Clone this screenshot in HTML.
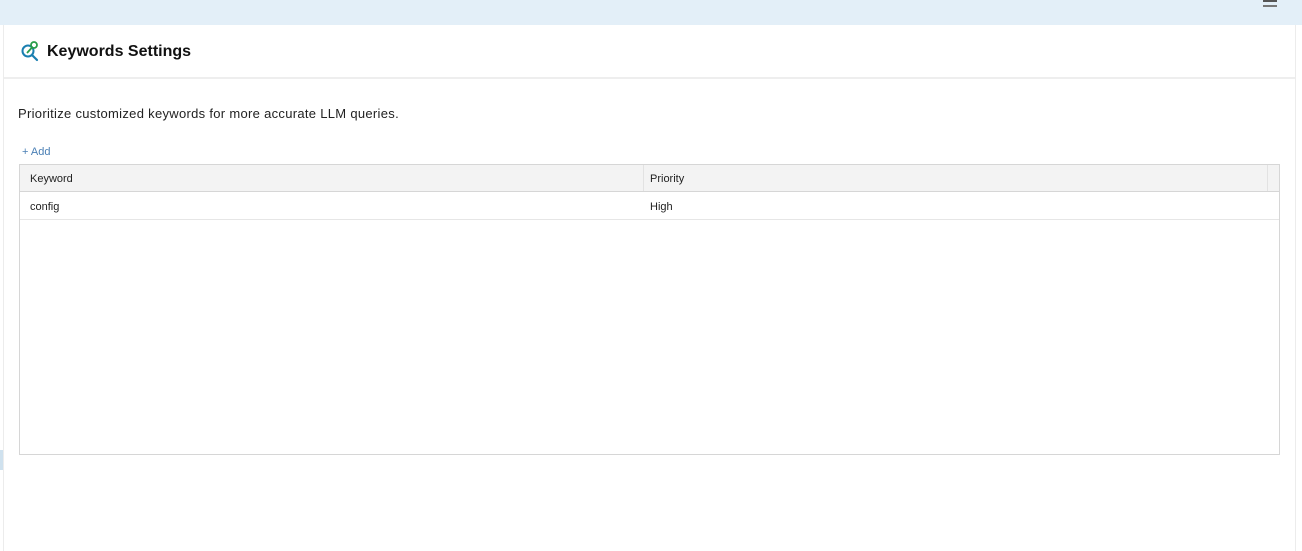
<!DOCTYPE html>
<html><head><style>
body{margin:0;width:1302px;height:551px;background:#fff;font-family:"Liberation Sans",sans-serif;position:relative;overflow:hidden;color:#222}
.top{position:absolute;left:0;top:0;width:1302px;height:25px;background:#e3eff8}
.panel{position:absolute;left:3px;top:25px;width:1291px;height:526px;background:#fff;border-left:1px solid #ececec;border-right:1px solid #ececec}
.hdr{position:absolute;left:0;top:0;width:100%;height:52px;border-bottom:2px solid #eee}
.title{position:absolute;left:43px;top:18px;font-size:16px;font-weight:bold;color:#111}
.desc{position:absolute;left:14px;top:81px;font-size:13px;color:#222;letter-spacing:0.3px}
.add{position:absolute;left:18px;top:121px;font-size:11px;color:#4a7fb5}
.tbl{position:absolute;left:15px;top:139px;width:1259px;height:289px;border:1px solid #d6d6d6}
.th{position:absolute;left:0;top:0;width:100%;height:26px;background:#f3f3f3;border-bottom:1px solid #d6d6d6;font-size:11px}
.row{position:absolute;left:0;top:27px;width:100%;height:27px;border-bottom:1px solid #e6e6e6;font-size:11px}
.c1{position:absolute;left:10px;top:8px}.c2{position:absolute;left:630px;top:8px}
.row .c1,.row .c2{top:9px}
.div{position:absolute;left:623px;top:0;width:1px;height:26px;background:#e2e2e2}
.div2{position:absolute;left:1247px;top:0;width:1px;height:26px;background:#e2e2e2}
.ham{position:absolute;left:1263px;top:0;width:14px}
.ham div{height:2px;background:#555;margin-bottom:3px}
</style></head><body>
<div class="top"><div class="ham"><div style="margin-top:0"></div><div style="background:#777"></div></div></div>
<div style="position:absolute;left:0;top:450px;width:3px;height:20px;background:#cfe1ee"></div>
<div class="panel">
 <div class="hdr">
  <svg style="position:absolute;left:16px;top:15px" width="22" height="22" viewBox="0 0 22 22">
   <circle cx="8" cy="11" r="5.5" fill="none" stroke="#1a7fb0" stroke-width="2"/>
   <line x1="12" y1="15" x2="17" y2="20" stroke="#1a7fb0" stroke-width="2.2" stroke-linecap="round"/>
   <circle cx="14" cy="5" r="3" fill="none" stroke="#2a9d4a" stroke-width="1.8"/>
   <line x1="12" y1="7.5" x2="7" y2="13" stroke="#2a9d4a" stroke-width="1.8"/>
  </svg>
  <div class="title">Keywords Settings</div>
 </div>
 <div class="desc">Prioritize customized keywords for more accurate LLM queries.</div>
 <div class="add">+ Add</div>
 <div class="tbl">
  <div class="th"><span class="c1">Keyword</span><div class="div"></div><span class="c2">Priority</span><div class="div2"></div></div>
  <div class="row"><span class="c1">config</span><span class="c2">High</span></div>
 </div>
</div>
</body></html>
